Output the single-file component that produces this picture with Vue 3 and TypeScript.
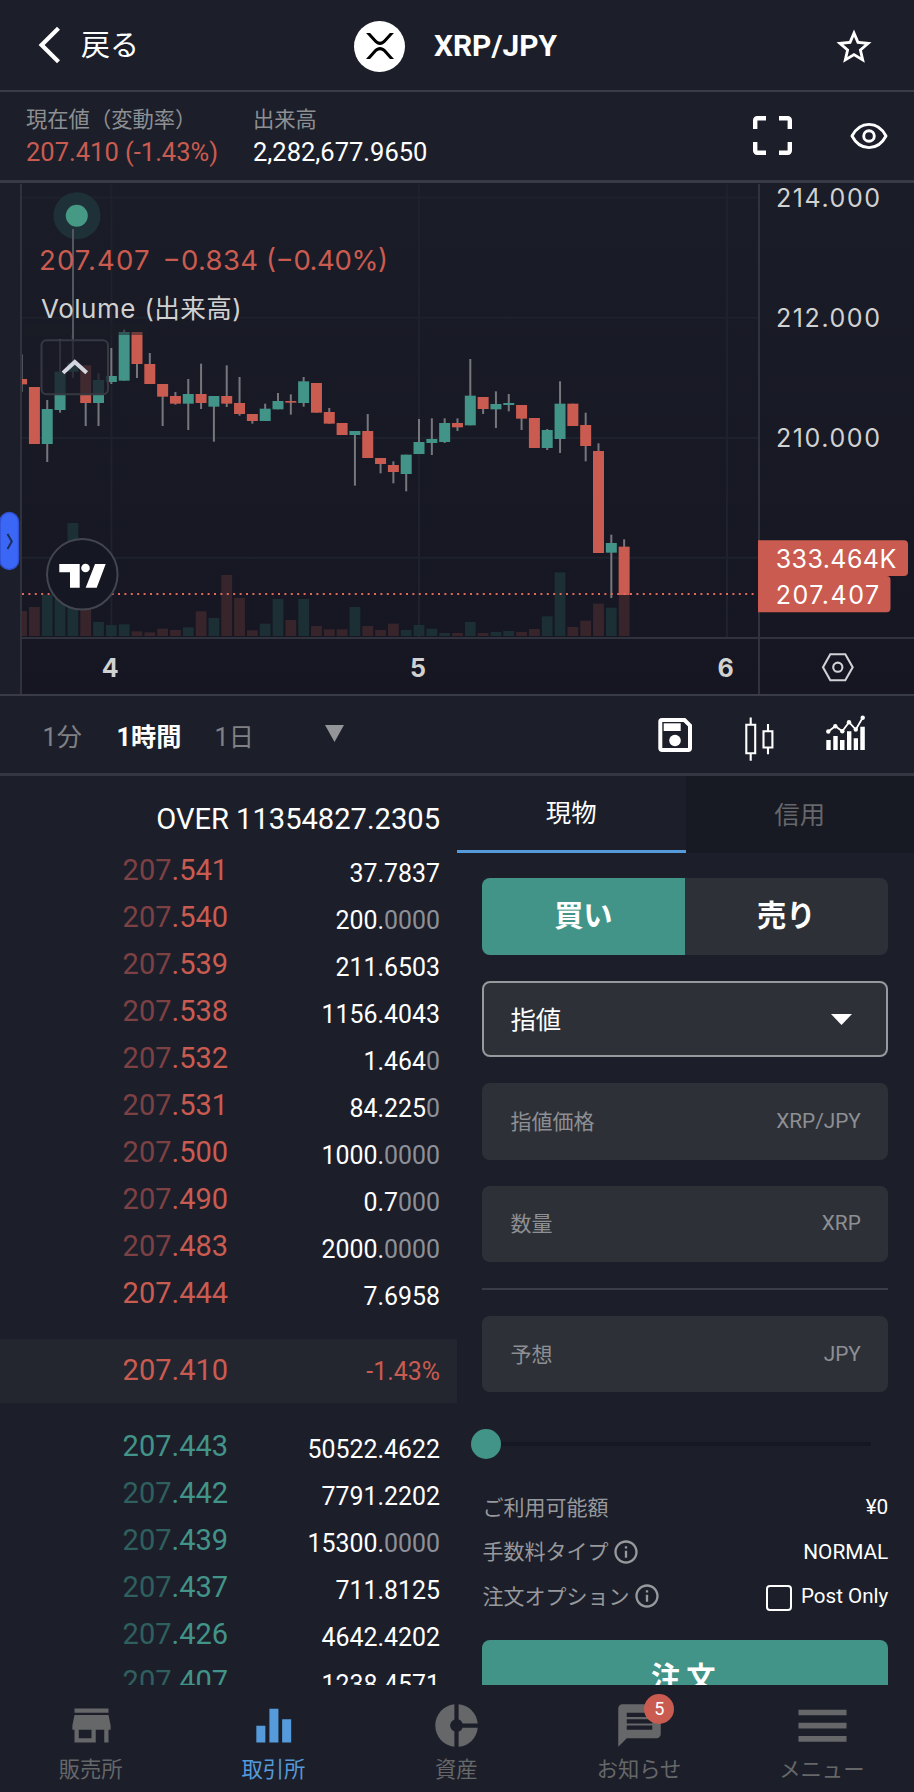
<script setup lang="ts">
interface Candle {
  up: boolean
  high: number
  top: number
  bottom: number
  low: number
  volume: number
}

interface BookRow {
  head: string
  tail: string
  qty: string
  rest: string
}

// up, high, body top, body bottom, low (thirds of a pixel below the pane's top edge), volume height in thirds
const raw: [number, number, number, number, number, number][] = [
  [0, 523, 597, 613, 636, 75], [0, 621, 621, 792, 792, 87], [1, 660, 687, 792, 846, 124],
  [1, 477, 575, 690, 698, 150], [1, 465, 548, 575, 593, 339], [0, 556, 556, 669, 738, 98],
  [1, 580, 600, 669, 738, 42], [1, 504, 588, 606, 612, 33], [1, 449, 456, 602, 602, 35],
  [0, 456, 456, 552, 594, 14], [0, 519, 552, 612, 612, 11], [0, 612, 612, 650, 738, 22],
  [0, 636, 648, 671, 674, 18], [1, 597, 642, 671, 750, 26], [0, 551, 642, 669, 687, 74],
  [1, 648, 648, 680, 785, 54], [0, 556, 648, 671, 681, 183], [0, 591, 669, 702, 707, 114],
  [0, 702, 702, 723, 731, 17], [1, 671, 686, 723, 723, 37], [1, 639, 663, 688, 688, 111],
  [0, 643, 663, 668, 704, 48], [1, 591, 604, 669, 680, 111], [0, 609, 609, 698, 698, 30],
  [0, 684, 696, 731, 731, 20], [0, 729, 729, 765, 765, 20], [1, 753, 753, 765, 917, 87],
  [0, 702, 753, 834, 834, 30], [0, 834, 834, 852, 880, 18], [0, 844, 855, 876, 910, 37],
  [1, 824, 824, 882, 934, 18], [1, 717, 786, 822, 822, 33], [1, 715, 777, 789, 825, 22],
  [1, 715, 729, 786, 789, 9], [0, 715, 729, 742, 753, 9], [1, 537, 647, 736, 736, 42],
  [0, 651, 651, 687, 702, 9], [1, 634, 672, 688, 744, 12], [1, 642, 669, 675, 694, 15],
  [0, 675, 675, 716, 750, 12], [0, 714, 714, 804, 804, 21], [1, 747, 750, 804, 810, 59],
  [1, 604, 671, 777, 819, 191], [0, 671, 671, 738, 738, 27], [0, 698, 735, 798, 844, 46],
  [0, 790, 813, 1119, 1119, 97], [1, 1064, 1089, 1118, 1254, 85], [0, 1078, 1100, 1245, 1245, 123],
]

const candles: Candle[] = raw.map(([up, high, top, bottom, low, volume]) => ({
  up: up === 1,
  high: 180 + high / 3,
  top: 180 + top / 3,
  bottom: 180 + bottom / 3,
  low: 180 + low / 3,
  volume: volume / 3,
}))

const cx = (i: number): number => 21.6 + i * 12.82

const asks: BookRow[] = [
  { head: '207', tail: '.541', qty: '37.7837', rest: '' },
  { head: '207', tail: '.540', qty: '200.', rest: '0000' },
  { head: '207', tail: '.539', qty: '211.6503', rest: '' },
  { head: '207', tail: '.538', qty: '1156.4043', rest: '' },
  { head: '207', tail: '.532', qty: '1.464', rest: '0' },
  { head: '207', tail: '.531', qty: '84.225', rest: '0' },
  { head: '207', tail: '.500', qty: '1000.', rest: '0000' },
  { head: '207', tail: '.490', qty: '0.7', rest: '000' },
  { head: '207', tail: '.483', qty: '2000.', rest: '0000' },
  { head: '', tail: '207.444', qty: '7.6958', rest: '' },
]

const bids: BookRow[] = [
  { head: '', tail: '207.443', qty: '50522.4622', rest: '' },
  { head: '207', tail: '.442', qty: '7791.2202', rest: '' },
  { head: '207', tail: '.439', qty: '15300.', rest: '0000' },
  { head: '207', tail: '.437', qty: '711.8125', rest: '' },
  { head: '207', tail: '.426', qty: '4642.4202', rest: '' },
  { head: '207', tail: '.407', qty: '1238.4571', rest: '' },
]

const priceLabels = [
  { text: '214.000', y: 206.5 },
  { text: '212.000', y: 326.9 },
  { text: '210.000', y: 447.2 },
]

const nav = [
  { label: '販売所', path: 'M20 4H4v2h16V4zm1 10v-2l-1-5H4l-1 5v2h1v6h10v-6h4v6h2v-6h1zm-9 4H6v-4h6v4z' },
  { label: '取引所', path: 'M3.45 12.1H7.7V20H3.45zM9.6 4.1h4.25V20H9.6zM15.6 9h4.25v11H15.6z', active: true },
  { label: '資産', path: 'M11 9.16V2c-5 .5-9 4.79-9 10s4 9.5 9 10v-7.16c-1-.41-2-1.52-2-2.84s1-2.43 2-2.84zM14.86 11H22c-.48-4.75-4-8.53-9-9v7.16c1 .3 1.52.98 1.86 1.84zM13 14.84V22c5-.47 8.52-4.25 9-9h-7.14c-.34.86-.86 1.54-1.86 1.84z' },
  { label: 'お知らせ', path: 'M20 2H4c-1.1 0-1.99.9-1.99 2L2 22l4-4h14c1.1 0 2-.9 2-2V4c0-1.1-.9-2-2-2zm-2 12H6v-2h12v2zm0-3H6V9h12v2zm0-3H6V6h12v2z', badge: '5' },
  { label: 'メニュー', path: 'M.7 4.6h22.6v2.6H.7zM.7 10.7h22.6v2.7H.7zM.7 16.9h22.6v2.7H.7z' },
]

const infoPath = 'M11 7h2v2h-2zm0 4h2v6h-2zm1-9C6.48 2 2 6.48 2 12s4.48 10 10 10 10-4.48 10-10S17.52 2 12 2zm0 18c-4.41 0-8-3.59-8-8s3.59-8 8-8 8 3.59 8 8-3.59 8-8 8z'
</script>

<template>
  <div class="app">
    <header class="header">
      <svg class="back-icon" width="24" height="38" viewBox="0 0 24 38"><path d="M21.5 2.3 4.6 19l16.9 16.7" fill="none" stroke="#fff" stroke-width="4.2" /></svg>
      <span class="back">戻る</span>
      <span class="coin">
        <svg width="28" height="26" viewBox="0 0 512 424" preserveAspectRatio="none">
          <path d="M437 0h74L357 152.48c-55.77 55.19-146.19 55.19-202 0L.94 0H75l117 115.83a91.11 91.11 0 0 0 127.91 0z" />
          <path d="M74.05 424H0l155-153.42c55.77-55.19 146.19-55.19 202 0L512 424h-74L320 307.23a91.11 91.11 0 0 0-127.91 0z" />
        </svg>
      </span>
      <h1 class="title">XRP/JPY</h1>
      <svg class="star" width="42" height="42" viewBox="0 0 24 24"><path fill="#fff" d="M22 9.24l-7.19-.62L12 2 9.19 8.63 2 9.24l5.46 4.73L5.82 21 12 17.27 18.18 21l-1.63-7.03L22 9.24zM12 15.4l-3.76 2.27 1-4.28-3.32-2.88 4.38-.38L12 6.1l1.71 4.04 4.38.38-3.32 2.88 1 4.28L12 15.4z" /></svg>
    </header>

    <section class="ticker">
      <div class="stat first">
        <span class="stat-label">現在値（変動率）</span>
        <span class="stat-value down">207.410 (-1.43%)</span>
      </div>
      <div class="stat">
        <span class="stat-label">出来高</span>
        <span class="stat-value">2,282,677.9650</span>
      </div>
      <svg class="full" width="39" height="39" viewBox="0 0 39 39">
        <path d="M2.2 13V4.2a2 2 0 0 1 2-2H13M26 2.2h8.8a2 2 0 0 1 2 2V13M36.8 26v8.8a2 2 0 0 1-2 2H26M13 36.8H4.2a2 2 0 0 1-2-2V26" fill="none" stroke="#fff" stroke-width="4.4" />
      </svg>
      <svg class="eye" width="38" height="28" viewBox="0 0 38 28">
        <path d="M2 14C6.200 6 12 2.400 19 2.400S31.800 6 36 14C31.800 22 26 25.600 19 25.600S6.200 22 2 14z" fill="none" stroke="#fff" stroke-width="2.9" stroke-linejoin="round" />
        <circle cx="19" cy="14" r="5.300" fill="none" stroke="#fff" stroke-width="2.900" />
      </svg>
    </section>

    <svg class="chart" width="914" height="516" viewBox="0 180 914 516">
      <defs>
        <linearGradient id="pane" x1="0" y1="0" x2="0" y2="1">
          <stop offset="0" stop-color="#1a1c27" />
          <stop offset="1" stop-color="#151621" />
        </linearGradient>
        <clipPath id="plot"><rect x="22" y="184" width="736" height="453" /></clipPath>
      </defs>
      <rect x="0" y="180" width="914" height="516" fill="#1c1f2a" />
      <rect x="22" y="183" width="892" height="512" fill="url(#pane)" />
      <g class="grid">
        <path d="M22 197.500H758M22 317.700H758M22 438H758M22 557.700H758M111.400 184V637M419 184V637M727 184V637" />
      </g>
      <g clip-path="url(#plot)">
        <rect v-for="(c, i) in candles" :key="'v' + i" :x="cx(i) - 5.4" :y="636 - c.volume" width="10.800" :height="c.volume" :fill="c.up ? '#1b2f34' : '#38252b'" />
        <g v-for="(c, i) in candles" :key="'c' + i">
          <rect :x="cx(i) - 1" :y="c.high" width="2" :height="c.low - c.high" fill="#76777d" />
          <rect :x="cx(i) - 5.5" :y="c.top" width="11" :height="c.bottom - c.top" :fill="c.up ? '#429488' : '#ca5b50'" />
        </g>
        <rect x="22" y="325" width="125" height="10" fill="#191b26" opacity=".5" />
      </g>
      <path d="M22 594H758" stroke="#e2675c" stroke-width="2" stroke-dasharray="2 4.400" />
      <path d="M21 184V694M759 184V694" stroke="#30333d" stroke-width="2" />
      <path d="M21 638H914" stroke="#30333d" stroke-width="2" />
      <path d="M0 181.500H914" stroke="#383b46" stroke-width="3" />
      <path d="M0 695H914" stroke="#393c47" stroke-width="2" />

      <circle cx="77" cy="215.700" r="23.500" fill="#1f3138" />
      <circle cx="76.800" cy="215.700" r="11" fill="#459985" />
      <path d="M73 229V340" stroke="#55575f" stroke-width="2" />
      <g class="legend">
        <text x="39" y="269.600" font-size="27.500" textLength="110.500" fill="#ca5b50">207.407</text>
        <text x="162.500" y="269.600" font-size="27.500" textLength="95.500" fill="#ca5b50">−0.834</text>
        <text x="266" y="269.600" font-size="27.500" textLength="122" fill="#ca5b50">(−0.40%)</text>
        <text x="41" y="317.500" font-size="26" textLength="94.500">Volume</text>
        <text x="144.500" y="317.500" font-size="25.600" textLength="97">(出来高)</text>
      </g>

      <rect x="41.500" y="340.300" width="66.500" height="54" rx="5" fill="#191b26" fill-opacity=".78" stroke="#363842" stroke-width="2" />
      <path d="M64.500 371.500 74.800 362l10.400 9.500" fill="none" stroke="#d5d7e0" stroke-width="4" stroke-linecap="square" />

      <circle cx="82.300" cy="574.300" r="35.300" fill="#151722" stroke="#44464f" stroke-width="2" />
      <g fill="#fff">
        <path d="M59.300 564H79.700V587.700H70V572.300H59.300zM95 564H105.700L96.700 587.700H85.700z" />
        <circle cx="85.500" cy="568" r="4.300" />
      </g>

      <rect x="0" y="512.500" width="18.500" height="57" rx="9.250" fill="#3a67f5" stroke="#3151d4" stroke-width="1.500" />
      <path d="M7.500 534 11.800 541.500 7.500 549" fill="none" stroke="#1c2c5c" stroke-width="2" />

      <g class="axis">
        <text v-for="l in priceLabels" :key="l.text" x="776" :y="l.y" textLength="104">{{ l.text }}</text>
      </g>
      <path d="M758 540.200H904a4 4 0 0 1 4 4v27.700a4 4 0 0 1-4 4H886.500a4 4 0 0 1 4 4V608.200a4 4 0 0 1-4 4H758z" fill="#ca5b50" />
      <g class="axis on">
        <text x="775.700" y="567.600" textLength="120.500">333.464K</text>
        <text x="775.700" y="604" textLength="103.500">207.407</text>
      </g>
      <g class="days">
        <text x="110.300" y="677">4</text>
        <text x="418" y="677">5</text>
        <text x="725.500" y="677">6</text>
      </g>
      <path d="M830.300 654.200H845.300L852.700 667.200 845.300 680.200H830.300L823 667.200z" fill="none" stroke="#d1d1d6" stroke-width="2.100" />
      <circle cx="837.800" cy="667.200" r="4.600" fill="none" stroke="#d1d1d6" stroke-width="2.100" />
    </svg>

    <section class="toolbar">
      <span class="tf">1分</span>
      <span class="tf on">1時間</span>
      <span class="tf">1日</span>
      <svg class="caret" width="19" height="17" viewBox="0 0 19 17"><path d="M0 0h19L9.500 17z" fill="#949598" /></svg>
      <svg class="tools" width="210" height="48" viewBox="657 714 210 48">
        <path d="M662 720H684.500L690 725.500V748.300a1.700 1.700 0 0 1-1.700 1.700H662a1.700 1.700 0 0 1-1.700-1.700V721.700A1.700 1.700 0 0 1 662 720z" fill="none" stroke="#fff" stroke-width="4" />
        <path d="M663.700 723.300h17V731h-17z" fill="#fff" />
        <circle cx="675" cy="740.500" r="5.800" fill="#fff" />
        <path d="M746.300 724.800h8.900v28.400h-8.900zM750.700 717.600v7.200M750.700 753.200v7.500M763.500 731.300h8.900v16.200h-8.900zM768 724v7.300M768 747.500v6.800" fill="none" stroke="#fff" stroke-width="2.100" />
        <path d="M826.300 740h4.400v10h-4.400zM833.300 736h4.400v14h-4.400zM840 740h4.500v10H840zM847 731.300h4.400V750H847zM853.700 738.300h4.300V750h-4.300zM860.300 726.700h4.500V750h-4.500z" fill="#fff" />
        <path d="M828.300 731.500 835.300 726.200 842.300 731.300 849 722.200 855.800 729.500 862.700 717.800" fill="none" stroke="#fff" stroke-width="1.800" />
        <g fill="#fff"><circle cx="828.300" cy="731.500" r="2.200" /><circle cx="835.300" cy="726.200" r="2.200" /><circle cx="842.300" cy="731.300" r="2.200" /><circle cx="849" cy="722.200" r="2.200" /><circle cx="855.800" cy="729.500" r="2.200" /><circle cx="862.700" cy="717.800" r="2.200" /></g>
      </svg>
    </section>

    <main class="main">
      <section class="book">
        <div class="over">OVER 11354827.2305</div>
        <div v-for="r in asks" :key="r.tail" class="row ask">
          <span class="price"><span class="dim">{{ r.head }}</span>{{ r.tail }}</span>
          <span class="qty">{{ r.qty }}<span class="zero">{{ r.rest }}</span></span>
        </div>
        <div class="row last">
          <span class="price">207.410</span>
          <span class="change">-1.43%</span>
        </div>
        <div v-for="r in bids" :key="r.tail" class="row bid">
          <span class="price"><span class="dim">{{ r.head }}</span>{{ r.tail }}</span>
          <span class="qty">{{ r.qty }}<span class="zero">{{ r.rest }}</span></span>
        </div>
      </section>

      <section class="order">
        <div class="tabs">
          <div class="tab on">現物</div>
          <div class="tab">信用</div>
        </div>
        <div class="form">
          <div class="sides">
            <div class="side buy">買い</div>
            <div class="side">売り</div>
          </div>
          <div class="field select">
            <span>指値</span>
            <svg width="21" height="11" viewBox="0 0 21 11"><path d="M0 0h21L10.500 11z" fill="#fff" /></svg>
          </div>
          <div class="field"><span>指値価格</span><span class="unit">XRP/JPY</span></div>
          <div class="field"><span>数量</span><span class="unit">XRP</span></div>
          <div class="divider"></div>
          <div class="field"><span>予想</span><span class="unit">JPY</span></div>
          <div class="slider"><span class="thumb"></span><span class="track"></span></div>
          <div class="info"><span class="name">ご利用可能額</span><b>¥0</b></div>
          <div class="info">
            <span class="name">手数料タイプ</span>
            <svg class="i" width="28" height="28" viewBox="0 0 24 24"><path :d="infoPath" fill="#98999c" /></svg>
            <b>NORMAL</b>
          </div>
          <div class="info">
            <span class="name">注文オプション</span>
            <svg class="i" width="28" height="28" viewBox="0 0 24 24"><path :d="infoPath" fill="#98999c" /></svg>
            <b class="post"><i class="box"></i>Post Only</b>
          </div>
          <div class="submit">注文</div>
        </div>
      </section>
    </main>

    <nav class="nav">
      <div v-for="n in nav" :key="n.label" class="nav-item" :class="{ active: n.active }">
        <div class="nav-icon">
          <svg width="51" height="51" viewBox="0 0 24 24"><path :d="n.path" fill="currentColor" /></svg>
          <span v-if="n.badge" class="badge">{{ n.badge }}</span>
        </div>
        <span class="nav-label">{{ n.label }}</span>
      </div>
    </nav>
  </div>
</template>

<style>
body {
  background: #1c1f2a;
}
</style>

<style scoped>
.app {
  width: 914px;
  height: 1792px;
  overflow: hidden;
  background: #1c1f2a;
  color: #fff;
  font-family: Roboto, "Noto Sans CJK JP", sans-serif;
  display: flex;
  flex-direction: column;
}
.app > * {
  flex: none;
  box-sizing: border-box;
}
svg {
  display: block;
  flex: none;
}
.header {
  height: 92px;
  border-bottom: 2px solid #3a3d48;
  display: flex;
  align-items: center;
  padding: 0 39px 0 37px;
}
.back {
  margin-left: 20px;
  width: 273px;
  font-size: 29px;
  padding-bottom: 4px;
}
.coin {
  width: 51px;
  height: 51px;
  margin-top: 2px;
  border-radius: 50%;
  background: #fff;
  display: flex;
  align-items: center;
  justify-content: center;
}
.title {
  margin: 0 0 0 29px;
  font-size: 29.9px;
  font-weight: 700;
}
.star {
  margin: 4px 0 0 auto;
}
.ticker {
  height: 88px;
  display: flex;
  padding: 12px 26px 0 26px;
}
.stat {
  display: flex;
  flex-direction: column;
}
.first {
  width: 227px;
}
.stat-label {
  font-size: 21.3px;
  line-height: 32px;
  color: #8e8f93;
}
.stat-value {
  font-size: 25.5px;
  line-height: 33px;
}
.down {
  color: #ca5b50;
}
.full {
  margin: 12px 58px 0 auto;
}
.eye {
  margin-top: 18px;
}
.grid path {
  fill: none;
  stroke: #1e222c;
  stroke-width: 2;
}
.legend,
.axis {
  font-family: Inter, "Noto Sans CJK JP", sans-serif;
  fill: #d1d1d1;
}
.axis {
  font-size: 25px;
}
.on.axis {
  fill: #fff;
}
.days {
  font-family: Inter, sans-serif;
  font-size: 25px;
  font-weight: 700;
  text-anchor: middle;
  fill: #d1d1d1;
}
.toolbar {
  height: 80px;
  border-bottom: 3px solid #343742;
  display: flex;
  align-items: center;
  padding: 0 47px 0 42.500px;
  font-size: 25.2px;
}
.tf {
  width: 74px;
  color: #808185;
  white-space: nowrap;
}
.tf.on {
  width: 98px;
  color: #fff;
  font-weight: 700;
}
.caret {
  margin-left: 36px;
  margin-bottom: 2px;
}
.tools {
  margin-left: auto;
  margin-top: 6px;
}
.main {
  height: 909px;
  display: flex;
  overflow: hidden;
}
.book {
  width: 457px;
}
.over {
  box-sizing: border-box;
  height: 71px;
  padding: 15px 17px 0 0;
  line-height: 57px;
  text-align: right;
  font-size: 29.1px;
}
.row {
  height: 47px;
  padding: 0 17px 0 122.600px;
  display: flex;
  align-items: center;
  justify-content: space-between;
}
.price {
  font-size: 29px;
  padding-bottom: 2px;
}
.qty {
  font-size: 24.9px;
  padding-top: 6px;
}
.change {
  font-size: 24.9px;
}
.ask .price,
.last {
  color: #ca5b50;
}
.bid .price {
  color: #429488;
}
.ask .dim {
  color: #7d4144;
}
.bid .dim {
  color: #2f5f5e;
}
.zero {
  color: #8e9098;
}
.last {
  height: 64px;
  margin: 22px 0 20px;
  background: #23262f;
}
.order {
  width: 457px;
}
.tabs {
  display: flex;
  height: 76.500px;
}
.tab {
  flex: 1;
  box-sizing: border-box;
  text-align: center;
  font-size: 25.400px;
  line-height: 79px;
  background: #171923;
  color: #66676a;
}
.tab.on {
  background: none;
  color: #fff;
  line-height: 75px;
  border-bottom: 3px solid #559bdb;
}
.form {
  padding: 25.500px 25.700px 0 25.400px;
}
.sides {
  display: flex;
  height: 77px;
  border-radius: 8px;
  overflow: hidden;
  background: #2d3137;
}
.side {
  flex: 1;
  text-align: center;
  line-height: 76px;
  font-size: 29.25px;
  font-weight: 700;
  text-indent: -1px;
}
.buy {
  background: #429488;
}
.field {
  box-sizing: border-box;
  height: 76.600px;
  margin-top: 25.800px;
  padding: 0 27.500px 3px 28px;
  border-radius: 8px;
  background: #2d3137;
  color: #8e8f93;
  font-size: 21px;
  display: flex;
  align-items: center;
  justify-content: space-between;
}
.unit {
  font-size: 20.8px;
  padding-top: 2px;
}
.select {
  padding: 0 34.500px 0 26px;
  border: 2px solid #98999c;
  color: #fff;
  font-size: 25.4px;
}
.select span {
  padding-bottom: 3px;
}
.divider {
  height: 2px;
  margin-top: 25.800px;
  background: #3a3d48;
}
.slider {
  height: 30px;
  margin: 36.500px 17px 0 -11px;
  display: flex;
  align-items: center;
}
.thumb {
  width: 30px;
  height: 30px;
  border-radius: 50%;
  background: #429488;
}
.track {
  flex: 1;
  height: 4px;
  background: #151722;
}
.info {
  height: 44.600px;
  display: flex;
  align-items: center;
  font-size: 21px;
  color: #98999c;
}
.slider + .info {
  margin-top: 26px;
}
.name {
  padding-bottom: 3px;
}
.i {
  margin: 0 0 0 4px;
}
.info b {
  margin-left: auto;
  font-weight: 400;
  font-size: 20.8px;
  color: #fff;
}
.info .post {
  display: flex;
  align-items: center;
  font-size: 20.6px;
}
.box {
  box-sizing: border-box;
  width: 26px;
  height: 26px;
  margin: 3px 9px 0 0;
  border: 2px solid #fff;
  border-radius: 4px;
}
.submit {
  margin-top: 21px;
  height: 77px;
  border-radius: 8px;
  background: #429488;
  text-align: center;
  font-size: 29.25px;
  font-weight: 700;
  line-height: 76px;
  letter-spacing: 6px;
  text-indent: 2px;
}
.nav {
  height: 107px;
  display: flex;
  padding-top: 15px;
}
.nav-item {
  flex: 1;
  display: flex;
  flex-direction: column;
  align-items: center;
  font-size: 21.3px;
  line-height: 37px;
  color: #666769;
}
.nav-label {
  margin-right: 1.5px;
}
.active {
  color: #559bdb;
}
.nav-icon {
  position: relative;
}
.badge {
  position: absolute;
  left: 30px;
  top: -6px;
  width: 30px;
  height: 30px;
  border-radius: 50%;
  background: #ca5b50;
  color: #fff;
  font-size: 18px;
  line-height: 30px;
  text-align: center;
}
</style>
